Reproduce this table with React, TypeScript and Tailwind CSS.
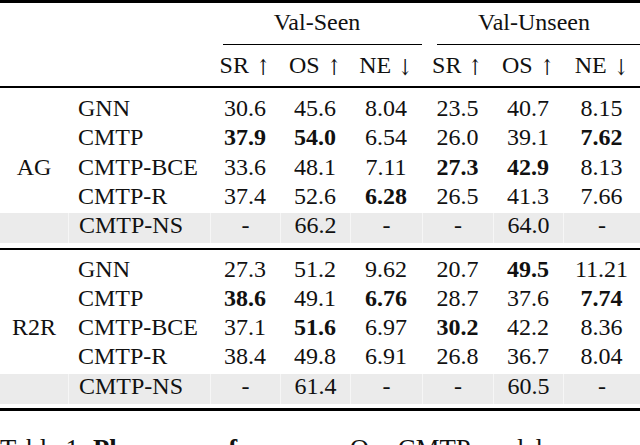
import React from "react";

const cols = "grid grid-cols-[68px_142px_70px_70px_72px_71px_70px_77px]";

// "*" in front of a value means bold (best result)
const sections = [
  {
    name: "AG",
    rows: [
      ["GNN", "30.6", "45.6", "8.04", "23.5", "40.7", "8.15"],
      ["CMTP", "*37.9", "*54.0", "6.54", "26.0", "39.1", "*7.62"],
      ["CMTP-BCE", "33.6", "48.1", "7.11", "*27.3", "*42.9", "8.13"],
      ["CMTP-R", "37.4", "52.6", "*6.28", "26.5", "41.3", "7.66"],
      ["CMTP-NS", "-", "66.2", "-", "-", "64.0", "-"],
    ],
  },
  {
    name: "R2R",
    rows: [
      ["GNN", "27.3", "51.2", "9.62", "20.7", "*49.5", "11.21"],
      ["CMTP", "*38.6", "49.1", "*6.76", "28.7", "37.6", "*7.74"],
      ["CMTP-BCE", "37.1", "*51.6", "6.97", "*30.2", "42.2", "8.36"],
      ["CMTP-R", "38.4", "49.8", "6.91", "26.8", "36.7", "8.04"],
      ["CMTP-NS", "-", "61.4", "-", "-", "60.5", "-"],
    ],
  },
];

const headers = [
  ["SR", "↑"],
  ["OS", "↑"],
  ["NE", "↓"],
  ["SR", "↑"],
  ["OS", "↑"],
  ["NE", "↓"],
];

function Row({ group, row, shaded }: { group: string; row: string[]; shaded: boolean }) {
  const cell = shaded ? "bg-[#ebebeb]" : "";
  const sep = shaded ? "border-l border-[#f6f6f6]" : "";
  return (
    <div className={`${cols} ${shaded ? "h-[30px]" : "h-[29.25px]"}`}>
      <div className={`${cell} text-center`}>{group}</div>
      <div className={`${cell} ${sep} pl-[10px]`}>{row[0]}</div>
      {row.slice(1).map((v, i) => (
        <div
          key={i}
          className={`${cell} ${sep} text-center ${v.startsWith("*") ? "font-bold" : ""}`}
        >
          {v.replace("*", "")}
        </div>
      ))}
    </div>
  );
}

export default function App() {
  return (
    <div className="w-[640px] h-[445px] overflow-hidden bg-white text-[#111] [font-family:'Liberation_Serif','Times_New_Roman',serif] text-[24px] leading-[24px]">
      <div className="h-[3px] bg-black" />

      <div className={`${cols} mt-[7px] h-[24px]`}>
        <div className="col-span-2" />
        <div className="col-span-3 text-center pl-[2px]">Val-Seen</div>
        <div className="col-span-3 text-center pl-[6px]">Val-Unseen</div>
      </div>

      <div className={`${cols} mt-[9.5px] h-[1.5px]`}>
        <div className="col-span-2" />
        <div className="col-span-3 ml-[13px] bg-black" />
        <div className="col-span-3 ml-[15px] bg-black" />
      </div>

      <div className={`${cols} mt-[8px] h-[24px]`}>
        <div className="col-span-2" />
        {headers.map(([label, arrow], i) => (
          <div key={i} className="flex justify-center items-baseline">
            <span>{label}</span>
            <span className="relative top-[2px] ml-[5px] text-[#111] text-[22px] [font-family:'DejaVu_Serif',serif] scale-x-75 -mx-[2px]">
              {arrow}
            </span>
          </div>
        ))}
      </div>

      <div className="mt-[9px] h-[2px] bg-black" />

      <div className="mt-[8px]">
        {sections[0].rows.map((r, i) => (
          <Row key={i} group={i === 2 ? sections[0].name : ""} row={r} shaded={i === 4} />
        ))}
      </div>

      <div className="mt-[5px] h-[2px] bg-black" />

      <div className="mt-[6.5px]">
        {sections[1].rows.map((r, i) => (
          <Row key={i} group={i === 2 ? sections[1].name : ""} row={r} shaded={i === 4} />
        ))}
      </div>

      <div className="mt-[4.5px] h-[3px] bg-black" />

      <p className="mt-[22px] text-[26.7px] leading-[32px] whitespace-nowrap">
        Table 1: <b>Planner performance.</b> Our CMTP model versus common baselines.
      </p>
    </div>
  );
}
